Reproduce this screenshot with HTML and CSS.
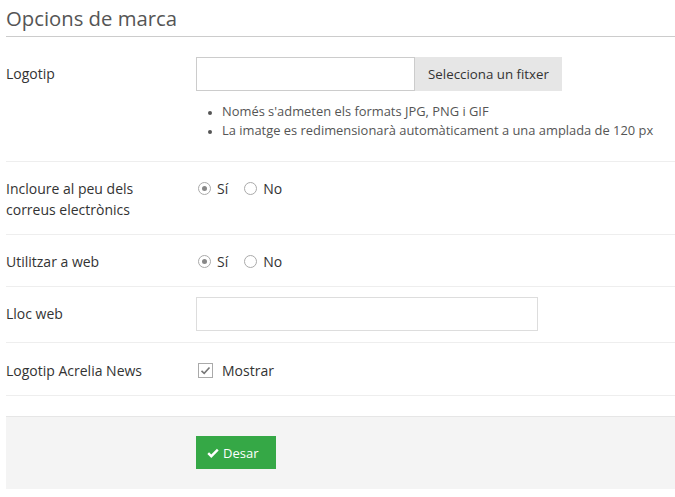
FILE: index.html
```html
<!DOCTYPE html>
<html>
<head>
<meta charset="utf-8">
<link rel="stylesheet" href="styles.css">
</head>
<body>
<div class="page">
  <h1 class="title">Opcions de marca</h1>
  <div class="row row-logo">
    <div class="label label-mid">Logotip</div>
    <div class="control">
      <div class="file">
        <div class="file-input"></div>
        <div class="file-btn">Selecciona un fitxer</div>
      </div>
      <ul class="hints">
        <li>Només s'admeten els formats JPG, PNG i GIF</li>
        <li>La imatge es redimensionarà automàticament a una amplada de 120 px</li>
      </ul>
    </div>
  </div>
  <div class="row row-text">
    <div class="label">Incloure al peu dels<br>correus electrònics</div>
    <div class="control radios">
      <span class="radio checked"></span><span class="opt">Sí</span>
      <span class="radio"></span><span class="opt">No</span>
    </div>
  </div>
  <div class="row row-text">
    <div class="label">Utilitzar a web</div>
    <div class="control radios">
      <span class="radio checked"></span><span class="opt">Sí</span>
      <span class="radio"></span><span class="opt">No</span>
    </div>
  </div>
  <div class="row row-input">
    <div class="label label-mid">Lloc web</div>
    <div class="control">
      <div class="text-input"></div>
    </div>
  </div>
  <div class="row row-text row-last">
    <div class="label">Logotip Acrelia News</div>
    <div class="control radios">
      <span class="checkbox"><svg width="11" height="11" viewBox="0 0 11 11"><path d="M1.5 5.8 L4.2 8.3 L9.5 2.5" fill="none" stroke="#777" stroke-width="1.6"/></svg></span><span class="opt">Mostrar</span>
    </div>
  </div>
  <div class="footer">
    <div class="btn"><svg width="12" height="10" viewBox="0 0 12 10"><path d="M1.2 5.2 L4.3 8.2 L10.8 1.6" fill="none" stroke="#fff" stroke-width="2.4"/></svg>Desar</div>
  </div>
</div>
</body>
</html>
```
FILE: styles.css
```css
html, body {
  margin: 0;
  padding: 0;
  background: #fff;
}
body {
  font-family: "Open Sans", "DejaVu Sans", sans-serif;
  color: #333;
  font-size: 13px;
}
.page {
  padding-left: 6px;
}
.title {
  margin: 0;
  font-size: 20.3px;
  font-weight: 400;
  color: #555;
  line-height: 30px;
  padding-top: 3px;
  height: 33px;
  border-bottom: 1px solid #ccc;
}
.row {
  display: flex;
  border-bottom: 1px solid #eee;
}
.label {
  width: 190px;
  flex: none;
  font-size: 14px;
  line-height: 21px;
  color: #333;
}
.control {
  flex: 1;
}
.row-logo {
  padding: 20px 0 20px;
  height: 84px;
}
.row-logo .label {
  padding-top: 6px;
}
.file {
  display: flex;
  height: 34px;
}
.file-input {
  width: 219px;
  border: 1px solid #ccc;
  box-sizing: border-box;
  height: 34px;
}
.file-btn {
  width: 147px;
  background: #e6e6e6;
  line-height: 34px;
  text-align: center;
  font-size: 13.3px;
  color: #333;
}
.hints {
  margin: 11px 0 0;
  padding-left: 26px;
  font-size: 12.9px;
  line-height: 19px;
  color: #555;
}
.hints li::marker {
  font-size: 10px;
}
.row-text {
  padding: 16px 0 14px;
}
.row-last {
  padding: 17px 0 14px;
}
.radios {
  display: flex;
  align-items: center;
  height: 21px;
  padding-left: 2px;
  font-size: 14px;
}
.radio {
  width: 11px;
  height: 11px;
  border: 1px solid #aaa;
  border-radius: 50%;
  box-sizing: content-box;
  position: relative;
  display: inline-block;
  margin-right: 6px;
  background: #fff;
}
.radio.checked::after {
  content: "";
  position: absolute;
  left: 3px;
  top: 3px;
  width: 5px;
  height: 5px;
  border-radius: 50%;
  background: #888;
}
.opt {
  margin-right: 16px;
  color: #333;
}
.checkbox {
  width: 13px;
  height: 13px;
  border: 1px solid #aaa;
  display: inline-flex;
  align-items: center;
  justify-content: center;
  margin-right: 9px;
}
.row-input {
  padding: 10px 0 11px;
}
.row-input .label {
  padding-top: 6px;
}
.text-input {
  width: 342px;
  height: 34px;
  border: 1px solid #ddd;
  box-sizing: border-box;
}
.footer {
  margin-top: 20px;
  background: #f4f4f4;
  border-top: 1px solid #e6e6e6;
  height: 73px;
  padding: 19px 0 0 190px;
  box-sizing: border-box;
}
.btn {
  display: inline-flex;
  align-items: center;
  width: 80px;
  height: 33px;
  background: #35a846;
  color: #fff;
  font-size: 13px;
  box-sizing: border-box;
  padding-left: 11px;
}
.btn svg {
  margin-right: 4px;
}
```
